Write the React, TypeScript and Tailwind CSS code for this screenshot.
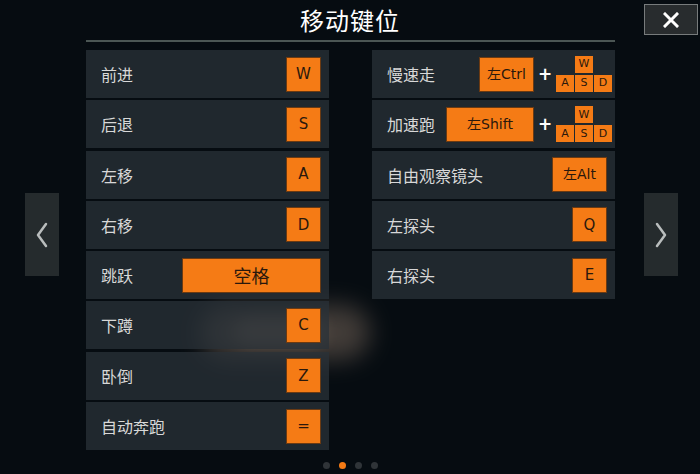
import { ReactNode } from 'react'

const cjk = "font-['Noto_Sans_CJK_SC',sans-serif]"
const keyFont = "font-['DejaVu_Sans','Noto_Sans_CJK_SC',sans-serif]"

function Key({ children, w = 'w-[35px]', size = 'text-[15px]' }: { children: ReactNode; w?: string; size?: string }) {
  return (
    <div
      className={`${w} h-[35px] ${size} ${keyFont} flex items-center justify-center bg-[#f57b15] border border-[#6b3a12] text-[#2a180c]`}
    >
      {children}
    </div>
  )
}

function Mini({ k }: { k: string }) {
  return (
    <div className={`w-[18px] h-[17px] text-[11px] ${keyFont} flex items-center justify-center bg-[#f57b15] text-[#2a180c]`}>
      {k}
    </div>
  )
}

function Wasd() {
  return (
    <div className="flex flex-col items-center gap-[2px]">
      <Mini k="W" />
      <div className="flex gap-[1px]">
        <Mini k="A" />
        <Mini k="S" />
        <Mini k="D" />
      </div>
    </div>
  )
}

function Combo({ label, w }: { label: string; w: string }) {
  return (
    <div className="flex items-center">
      <Key w={w} size="text-[14px]">{label}</Key>
      <span className="w-[22px] text-center text-white text-[17px] font-bold leading-none font-['DejaVu_Sans',sans-serif]">+</span>
      <Wasd />
    </div>
  )
}

function Row({ label, children, pr = 'pr-[8px]' }: { label: string; children: ReactNode; pr?: string }) {
  return (
    <div className={`h-[48px] flex items-center justify-between bg-[#2a3238]/75 pl-[15px] ${pr}`}>
      <span className={`text-[16px] text-[#d8d8d8] ${cjk}`}>{label}</span>
      {children}
    </div>
  )
}

const left: [string, string][] = [
  ['前进', 'W'],
  ['后退', 'S'],
  ['左移', 'A'],
  ['右移', 'D'],
  ['跳跃', '空格'],
  ['下蹲', 'C'],
  ['卧倒', 'Z'],
  ['自动奔跑', '='],
]

function Arrow({ dir }: { dir: 'l' | 'r' }) {
  return (
    <div className="mt-[143px] w-[34px] h-[83px] bg-[#252b2d] flex items-center justify-center">
      <svg width="14" height="26" viewBox="0 0 14 26" fill="none" stroke="#b9bdbd" strokeWidth="2.5" strokeLinecap="round" strokeLinejoin="round">
        {dir === 'l' ? <path d="M11 2 L3 13 L11 24" /> : <path d="M3 2 L11 13 L3 24" />}
      </svg>
    </div>
  )
}

export default function App() {
  return (
    <div className="relative w-[700px] h-[474px] overflow-hidden bg-[#060c11]">
      {/* hazy blob behind the list */}
      <div className="absolute left-[200px] top-[305px] w-[170px] h-[55px] rounded-full bg-[#6a5c52] opacity-60 blur-[12px]" />
      <div className="absolute left-[235px] top-[318px] w-[90px] h-[28px] rounded-full bg-[#7a6a60] opacity-50 blur-[8px]" />

      <div className="relative flex flex-col">
        <div className="h-[40px] flex items-center justify-center">
          <span className={`text-[24px] text-white tracking-[1px] ${cjk}`}>移动键位</span>
        </div>
        <button className="absolute left-[644px] top-[4px] w-[54px] h-[31px] bg-[#282c2e] border border-[#777b7c] flex items-center justify-center">
          <svg width="16" height="16" viewBox="0 0 16 16" stroke="#ffffff" strokeWidth="3" strokeLinecap="square">
            <path d="M2 2 L14 14 M14 2 L2 14" />
          </svg>
        </button>
        <div className="ml-[86px] w-[529px] h-[2px] bg-[#4b5654]" />

        <div className="flex items-start mt-[8px] pl-[25px]">
          <Arrow dir="l" />
          <div className="ml-[27px] w-[243px] flex flex-col gap-[2.3px]">
            {left.map(([l, k]) => (
              <Row key={l} label={l}>
                {k === '空格' ? (
                  <Key w="w-[139px]" size="text-[18px]">
                    <span className={cjk}>空格</span>
                  </Key>
                ) : (
                  <Key>{k}</Key>
                )}
              </Row>
            ))}
          </div>

          <div className="ml-[43px] w-[243px] flex flex-col gap-[2.3px]">
            <Row label="慢速走" pr="pr-[3px]">
              <Combo label="左Ctrl" w="w-[55px]" />
            </Row>
            <Row label="加速跑" pr="pr-[3px]">
              <Combo label="左Shift" w="w-[88px]" />
            </Row>
            <Row label="自由观察镜头">
              <Key w="w-[55px]" size="text-[14px]">左Alt</Key>
            </Row>
            <Row label="左探头">
              <Key>Q</Key>
            </Row>
            <Row label="右探头">
              <Key>E</Key>
            </Row>
          </div>
          <div className="ml-[29px]">
            <Arrow dir="r" />
          </div>
        </div>

        <div className="mt-[12px] flex justify-center gap-[9px] pl-[1px]">
          <div className="w-[7px] h-[7px] rounded-full bg-[#2f3438]" />
          <div className="w-[7px] h-[7px] rounded-full bg-[#f57b15]" />
          <div className="w-[7px] h-[7px] rounded-full bg-[#2f3438]" />
          <div className="w-[7px] h-[7px] rounded-full bg-[#2f3438]" />
        </div>
      </div>
    </div>
  )
}
